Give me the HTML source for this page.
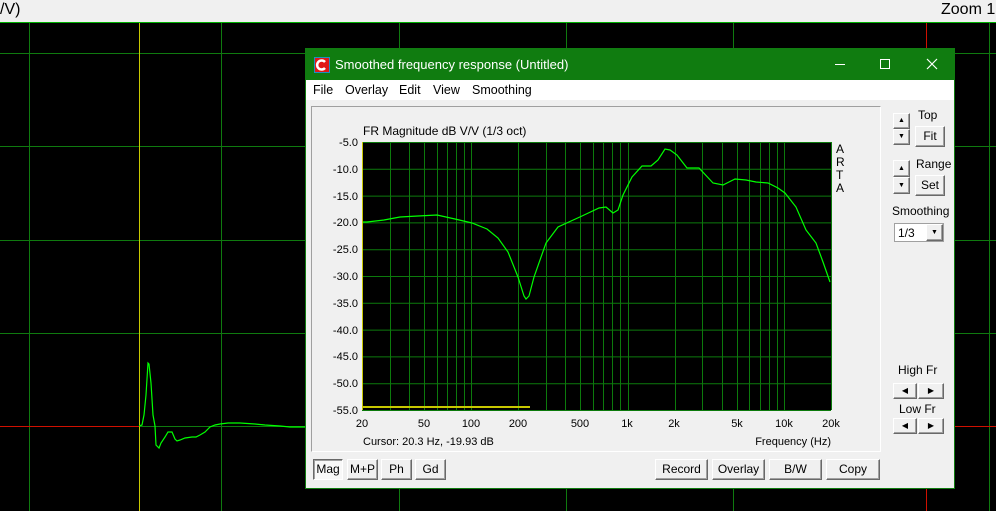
<!DOCTYPE html>
<html><head><meta charset="utf-8"><style>
*{margin:0;padding:0;box-sizing:border-box}
body{width:996px;height:511px;overflow:hidden;background:#000;font-family:"Liberation Sans",sans-serif;position:relative}
.a{position:absolute}
.t{font-size:12px;color:#000;white-space:nowrap}
.btn{position:absolute;background:#f0f0f0;border:1px solid;border-color:#fff #696969 #696969 #fff;box-shadow:inset -1px -1px 0 #a0a0a0;font-size:12px;text-align:center;color:#000;white-space:nowrap}
</style></head><body>
<svg class="a" style="left:0;top:0" width="996" height="511">
<rect x="0" y="0" width="996" height="22" fill="#f0f0f0"/>
<line x1="0" y1="22.5" x2="996" y2="22.5" stroke="#00b000"/>
<g stroke="#0f7a0f" stroke-width="1">
<line x1="29.5" y1="23" x2="29.5" y2="511"/><line x1="221.5" y1="23" x2="221.5" y2="511"/>
<line x1="399.5" y1="23" x2="399.5" y2="511"/><line x1="566.5" y1="23" x2="566.5" y2="511"/>
<line x1="733.5" y1="23" x2="733.5" y2="511"/><line x1="989.5" y1="23" x2="989.5" y2="511"/>
<line x1="0" y1="53.5" x2="996" y2="53.5"/><line x1="0" y1="146.5" x2="996" y2="146.5"/>
<line x1="0" y1="240.5" x2="996" y2="240.5"/><line x1="0" y1="333.5" x2="996" y2="333.5"/>
<line x1="139" y1="426.5" x2="926" y2="426.5"/>
</g>
<line x1="0" y1="426.5" x2="139" y2="426.5" stroke="#d01000"/>
<line x1="926" y1="426.5" x2="996" y2="426.5" stroke="#d01000"/>
<line x1="926.5" y1="23" x2="926.5" y2="511" stroke="#d01000"/>
<line x1="139.5" y1="23" x2="139.5" y2="511" stroke="#c8c800"/>
<polyline fill="none" stroke="#00ff00" stroke-width="1.2" points="139,426 142,425 144,415 146,395 148,363 149,364 151,383 153,415 155,426 156,445 159,448 161,443 165,437 168,432 172,432 175,439 177,441 180,440 185,438 192,437 196,437 200,435 205,432 210,427 215,425 220,424 228,423 240,423 255,424 265,425 280,426 290,427 305,427"/>
</svg>
<div class="a" style="left:0;top:1px;font-size:16px;white-space:nowrap">/V)</div>
<div class="a" style="left:941px;top:1px;font-size:16px;white-space:nowrap">Zoom 1:</div>

<div class="a" style="left:305px;top:48px;width:650px;height:441px;background:#f0f0f0;border:1px solid #107c10">
<div class="a" style="left:0;top:0;width:648px;height:31px;background:#107c10"></div>
<svg class="a" style="left:8px;top:8px" width="16" height="16"><rect width="16" height="16" fill="#2090c0"/><rect x="1" y="1" width="14" height="14" fill="#e01818"/><path d="M11 5 A4.5 4.5 0 1 0 11 11" stroke="#fff" stroke-width="2.5" fill="none"/></svg>
<div class="a" style="left:29px;top:8px;font-size:13px;color:#fff;white-space:nowrap">Smoothed frequency response (Untitled)</div>
<div class="a" style="left:529px;top:15px;width:10px;height:1px;background:#fff"></div>
<div class="a" style="left:574px;top:10px;width:10px;height:10px;border:1px solid #fff"></div>
<svg class="a" style="left:620px;top:9px" width="12" height="12"><path d="M1 1L11 11M11 1L1 11" stroke="#fff" stroke-width="1.2"/></svg>
<div class="a" style="left:0;top:31px;width:648px;height:20px;background:#fff"></div>
<div class="a t" style="left:7px;top:34px;font-size:12.5px">File</div>
<div class="a t" style="left:39px;top:34px;font-size:12.5px">Overlay</div>
<div class="a t" style="left:93px;top:34px;font-size:12.5px">Edit</div>
<div class="a t" style="left:127px;top:34px;font-size:12.5px">View</div>
<div class="a t" style="left:166px;top:34px;font-size:12.5px">Smoothing</div>
<div class="a" style="left:5px;top:57px;width:570px;height:346px;border:1px solid;border-color:#a0a0a0 #fff #fff #a0a0a0"></div>
</div>

<svg class="a" style="left:0;top:0" width="996" height="511">
<rect x="362" y="142" width="469" height="268" fill="#000"/>
<g stroke="#0c7a0c" stroke-width="1" id="g"></g>
<g font-family="Liberation Sans" font-size="11" fill="#000" text-anchor="end">
<text x="358" y="146">-5.0</text><text x="358" y="173">-10.0</text><text x="358" y="200">-15.0</text><text x="358" y="226">-20.0</text><text x="358" y="253">-25.0</text><text x="358" y="280">-30.0</text><text x="358" y="307">-35.0</text><text x="358" y="334">-40.0</text><text x="358" y="360">-45.0</text><text x="358" y="387">-50.0</text><text x="358" y="414">-55.0</text>
</g>
<g font-family="Liberation Sans" font-size="11" fill="#000" text-anchor="middle">
<text x="362" y="427">20</text><text x="424" y="427">50</text><text x="471" y="427">100</text><text x="518" y="427">200</text><text x="580" y="427">500</text><text x="627" y="427">1k</text><text x="674" y="427">2k</text><text x="737" y="427">5k</text><text x="784" y="427">10k</text><text x="831" y="427">20k</text>
</g>
<text x="363" y="135" font-family="Liberation Sans" font-size="12" fill="#000">FR Magnitude dB V/V (1/3 oct)</text>
<text x="363" y="445" font-family="Liberation Sans" font-size="11" fill="#000">Cursor: 20.3 Hz, -19.93 dB</text>
<text x="831" y="445" font-family="Liberation Sans" font-size="11" fill="#000" text-anchor="end">Frequency (Hz)</text>
<g font-family="Liberation Sans" font-size="12" fill="#000"><text x="836" y="153">A</text><text x="836" y="166">R</text><text x="836" y="179">T</text><text x="836" y="192">A</text></g>
<line x1="362.5" y1="142" x2="362.5" y2="410" stroke="#c8c800"/>
<line x1="363" y1="407" x2="530" y2="407" stroke="#c8c800" stroke-width="2"/>
<polyline fill="none" stroke="#00ff00" stroke-width="1.2" points="363,222 367,222 384,220 400,217 418,216 437,215 455,219 472,223 487,229 498,238 508,252 518,277 524,296 526,299 529,296 534,277 546,243 558,227 582,216 599,208 606,207 613,213 618,210 623,195 632,177 642,166 651,166 658,160 665,149 670,150 677,155 687,168 699,168 713,183 723,185 735,179 746,180 756,182 768,183 778,188 785,193 796,207 806,230 816,243 823,262 830,282"/>
</svg>
<script>
var g=document.getElementById('g'),s='';
function L(x1,y1,x2,y2){s+='<line x1="'+x1+'" y1="'+y1+'" x2="'+x2+'" y2="'+y2+'"/>';}
for(var i=0;i<11;i++){var y=142+i*26.8;L(362,y+.5,831,y+.5);}
var d=156.3;
[[20,100,10],[200,1000,100],[2000,10000,1000],[20000,20000,10000]].forEach(function(r){for(var f=r[0];f<=r[1];f+=r[2]){var x=Math.round(362+d*Math.log10(f/20))+.5;L(x,142,x,410);}});
g.innerHTML=s;
</script>

<div class="btn" style="left:313px;top:459px;width:30px;height:21px;background:#f8f8f8;border-color:#696969 #fff #fff #696969;box-shadow:inset 1px 1px 0 #a0a0a0;line-height:19px">Mag</div>
<div class="btn" style="left:347px;top:459px;width:31px;height:21px;line-height:19px">M+P</div>
<div class="btn" style="left:381px;top:459px;width:31px;height:21px;line-height:19px">Ph</div>
<div class="btn" style="left:415px;top:459px;width:31px;height:21px;line-height:19px">Gd</div>
<div class="btn" style="left:655px;top:459px;width:53px;height:21px;line-height:19px">Record</div>
<div class="btn" style="left:712px;top:459px;width:53px;height:21px;line-height:19px">Overlay</div>
<div class="btn" style="left:769px;top:459px;width:53px;height:21px;line-height:19px">B/W</div>
<div class="btn" style="left:826px;top:459px;width:54px;height:21px;line-height:19px">Copy</div>

<div class="btn" style="left:893px;top:113px;width:17px;height:16px;font-size:7px;line-height:14px">▲</div>
<div class="btn" style="left:893px;top:129px;width:17px;height:16px;font-size:7px;line-height:14px">▼</div>
<div class="a t" style="left:918px;top:108px">Top</div>
<div class="btn" style="left:915px;top:126px;width:30px;height:21px;line-height:19px">Fit</div>
<div class="btn" style="left:893px;top:160px;width:17px;height:17px;font-size:7px;line-height:15px">▲</div>
<div class="btn" style="left:893px;top:177px;width:17px;height:17px;font-size:7px;line-height:15px">▼</div>
<div class="a t" style="left:916px;top:157px">Range</div>
<div class="btn" style="left:915px;top:175px;width:30px;height:21px;line-height:19px">Set</div>
<div class="a t" style="left:892px;top:204px">Smoothing</div>
<div class="a" style="left:894px;top:223px;width:50px;height:19px;background:#fff;border:1px solid #a0a0a0"></div>
<div class="a t" style="left:898px;top:226px">1/3</div>
<div class="btn" style="left:926px;top:224px;width:17px;height:17px;font-size:7px;line-height:15px">▼</div>
<div class="a t" style="left:898px;top:363px">High Fr</div>
<div class="btn" style="left:893px;top:383px;width:24px;height:16px;font-size:8px;line-height:14px">◀</div>
<div class="btn" style="left:918px;top:383px;width:26px;height:16px;font-size:8px;line-height:14px">▶</div>
<div class="a t" style="left:899px;top:402px">Low Fr</div>
<div class="btn" style="left:893px;top:418px;width:24px;height:16px;font-size:8px;line-height:14px">◀</div>
<div class="btn" style="left:918px;top:418px;width:26px;height:16px;font-size:8px;line-height:14px">▶</div>
</body></html>
